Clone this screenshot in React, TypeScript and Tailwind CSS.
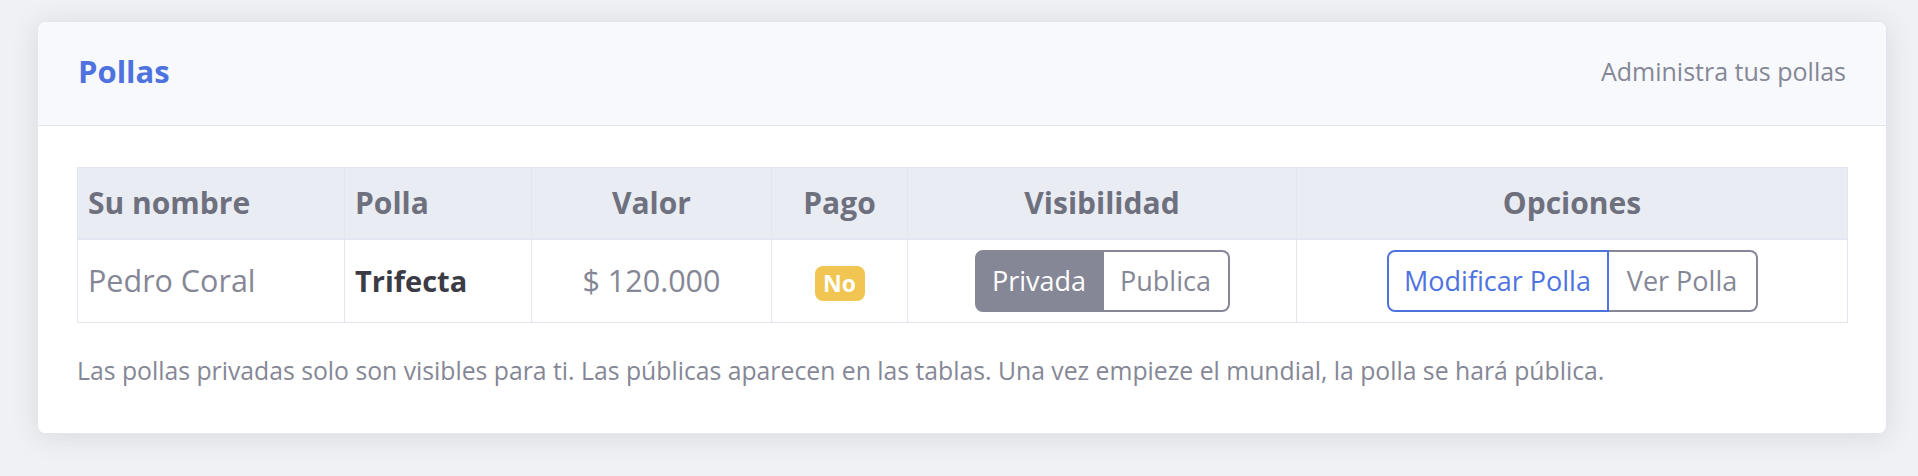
import React from "react";

const font = { fontFamily: "'Open Sans', Lato, sans-serif" };

export default function App() {
  return (
    <div
      className="min-h-[476px] w-full bg-[#f0f1f4] pl-[37px] pr-[31px] pt-[21px] text-[#858796]"
      style={font}
    >
      <div className="overflow-hidden rounded-[8px] border border-[#e3e6f0] bg-white shadow-[0_3px_28px_0_rgba(58,59,69,0.12)]">
        <div className="flex h-[104px] items-center justify-between border-b border-[#e3e6f0] bg-[#f8f9fc] px-[40px] pb-[4px]">
          <h6 className="text-[31px] font-bold leading-none text-[#4e73df]">Pollas</h6>
          <span className="text-[25px] leading-none text-[#858796]">Administra tus pollas</span>
        </div>
        <div className="px-[39px] pt-[41px] pb-[44px]">
          <table className="w-[1770px] table-fixed border-collapse">
            <colgroup>
              <col className="w-[267px]" />
              <col className="w-[187px]" />
              <col className="w-[240px]" />
              <col className="w-[136px]" />
              <col className="w-[389px]" />
              <col className="w-[551px]" />
            </colgroup>
            <thead>
              <tr className="h-[71px] bg-[#eaecf4] text-[30px] font-bold text-[#6e707e]">
                <th className="border border-b-2 border-[#e3e6f0] px-[10px] text-left font-bold">Su nombre</th>
                <th className="border border-b-2 border-[#e3e6f0] px-[10px] text-left font-bold">Polla</th>
                <th className="border border-b-2 border-[#e3e6f0] px-[10px] text-center font-bold">Valor</th>
                <th className="border border-b-2 border-[#e3e6f0] px-[10px] text-center font-bold">Pago</th>
                <th className="border border-b-2 border-[#e3e6f0] px-[10px] text-center font-bold">Visibilidad</th>
                <th className="border border-b-2 border-[#e3e6f0] px-[10px] text-center font-bold">Opciones</th>
              </tr>
            </thead>
            <tbody>
              <tr className="h-[84px] text-[30.5px]">
                <td className="border border-[#e3e6f0] px-[10px] text-left text-[#858796]">Pedro Coral</td>
                <td className="border border-[#e3e6f0] px-[10px] text-left text-[29px] font-bold text-[#3a3b45]">Trifecta</td>
                <td className="border border-[#e3e6f0] px-[10px] text-center text-[#858796]">$ 120.000</td>
                <td className="border border-[#e3e6f0] px-[10px] text-center">
                  <span className="inline-flex h-[35px] w-[50px] items-center justify-center rounded-[8px] bg-[#f0c552] text-[23px] font-bold leading-none text-white">
                    No
                  </span>
                </td>
                <td className="border border-[#e3e6f0] px-[10px] text-center">
                  <div className="inline-flex h-[62px] align-middle">
                    <button className="flex w-[129px] items-center justify-center rounded-l-[8px] border-2 border-[#858796] bg-[#858796] text-[27px] text-white">
                      Privada
                    </button>
                    <button className="flex w-[126px] items-center justify-center rounded-r-[8px] border-2 border-l-0 border-[#858796] bg-white text-[27px] text-[#858796]">
                      Publica
                    </button>
                  </div>
                </td>
                <td className="border border-[#e3e6f0] px-[10px] text-center">
                  <div className="inline-flex h-[62px] align-middle">
                    <button className="flex w-[222px] items-center justify-center rounded-l-[8px] border-2 border-[#4e73df] bg-white text-[27px] text-[#4e73df]">
                      Modificar Polla
                    </button>
                    <button className="flex w-[149px] items-center justify-center rounded-r-[8px] border-2 border-l-0 border-[#858796] bg-white text-[27px] text-[#858796]">
                      Ver Polla
                    </button>
                  </div>
                </td>
              </tr>
            </tbody>
          </table>
          <p className="mt-[30px] text-[24.75px] leading-[36px] text-[#858796]">
            Las pollas privadas solo son visibles para ti. Las públicas aparecen en las tablas. Una vez empieze el mundial, la polla se hará pública.
          </p>
        </div>
      </div>
    </div>
  );
}
